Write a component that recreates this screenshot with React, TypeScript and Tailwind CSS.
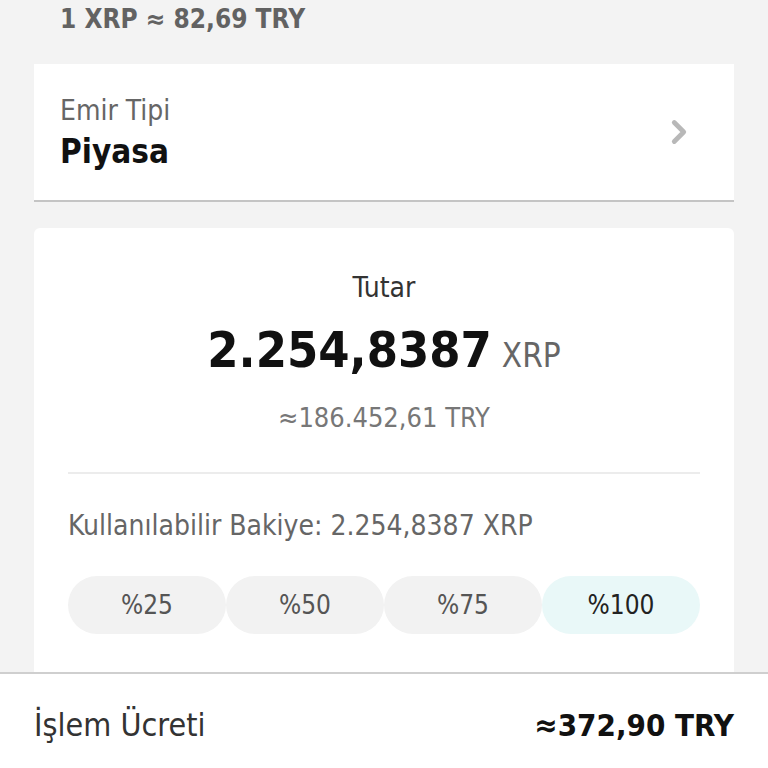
import { ChevronRight } from "lucide-react";

const font = { fontFamily: '"Liberation Sans Narrow", "DejaVu Sans Condensed", Roboto, sans-serif' };

const steps = ["%25", "%50", "%75", "%100"];

export default function App() {
  return (
    <div style={font} className="w-[768px] h-[768px] bg-[#f3f3f3] overflow-hidden flex flex-col">
      <div className="h-[64px] pl-[60px] pt-[2px] text-[26px] leading-[34px] font-bold text-[#626262]">
        1 XRP ≈ 82,69 TRY
      </div>

      <div className="mx-[34px] h-[138px] bg-white border-b-2 border-[#c4c4c4] flex items-center justify-between pl-[26px] pr-[36px]">
        <div className="flex flex-col pt-[4px]">
          <span className="text-[28px] leading-[36px] text-[#666]">Emir Tipi</span>
          <span className="text-[33px] leading-[46px] font-bold text-[#111]">Piyasa</span>
        </div>
        <ChevronRight className="w-[38px] h-[38px] text-[#b8b8b8]" strokeWidth={3} />
      </div>

      <div className="mx-[34px] mt-[26px] h-[444px] bg-white rounded-t-md px-[34px] flex flex-col">
        <div className="pt-[42px] text-center text-[28px] leading-[36px] text-[#333]">Tutar</div>
        <div className="mt-[14px] flex items-baseline justify-center gap-[10px]">
          <span className="text-[50px] leading-[60px] font-bold text-[#111]">2.254,8387</span>
          <span className="text-[33px] leading-[40px] text-[#666]">XRP</span>
        </div>
        <div className="mt-[20px] text-center text-[27px] leading-[36px] text-[#777]">≈186.452,61 TRY</div>
        <div className="mt-[36px] h-[2px] bg-[#ececec]" />
        <div className="mt-[34px] text-[28px] leading-[36px] text-[#666]">
          Kullanılabilir Bakiye: 2.254,8387 XRP
        </div>
        <div className="mt-[32px] grid grid-cols-4 h-[58px]">
          {steps.map((s, i) => (
            <div
              key={s}
              className={
                i === 3
                  ? "rounded-full bg-[#e9f8f8] flex items-center justify-center text-[26px] text-[#222]"
                  : "rounded-full bg-[#f2f2f2] flex items-center justify-center text-[26px] text-[#555]"
              }
            >
              {s}
            </div>
          ))}
        </div>
      </div>

      <div className="flex-1 bg-white border-t-2 border-[#cfcfcf] flex items-center justify-between px-[34px] pt-[8px]">
        <span className="text-[32px] text-[#333]">İşlem Ücreti</span>
        <span className="text-[31px] font-bold text-[#111]">≈372,90 TRY</span>
      </div>
    </div>
  );
}
